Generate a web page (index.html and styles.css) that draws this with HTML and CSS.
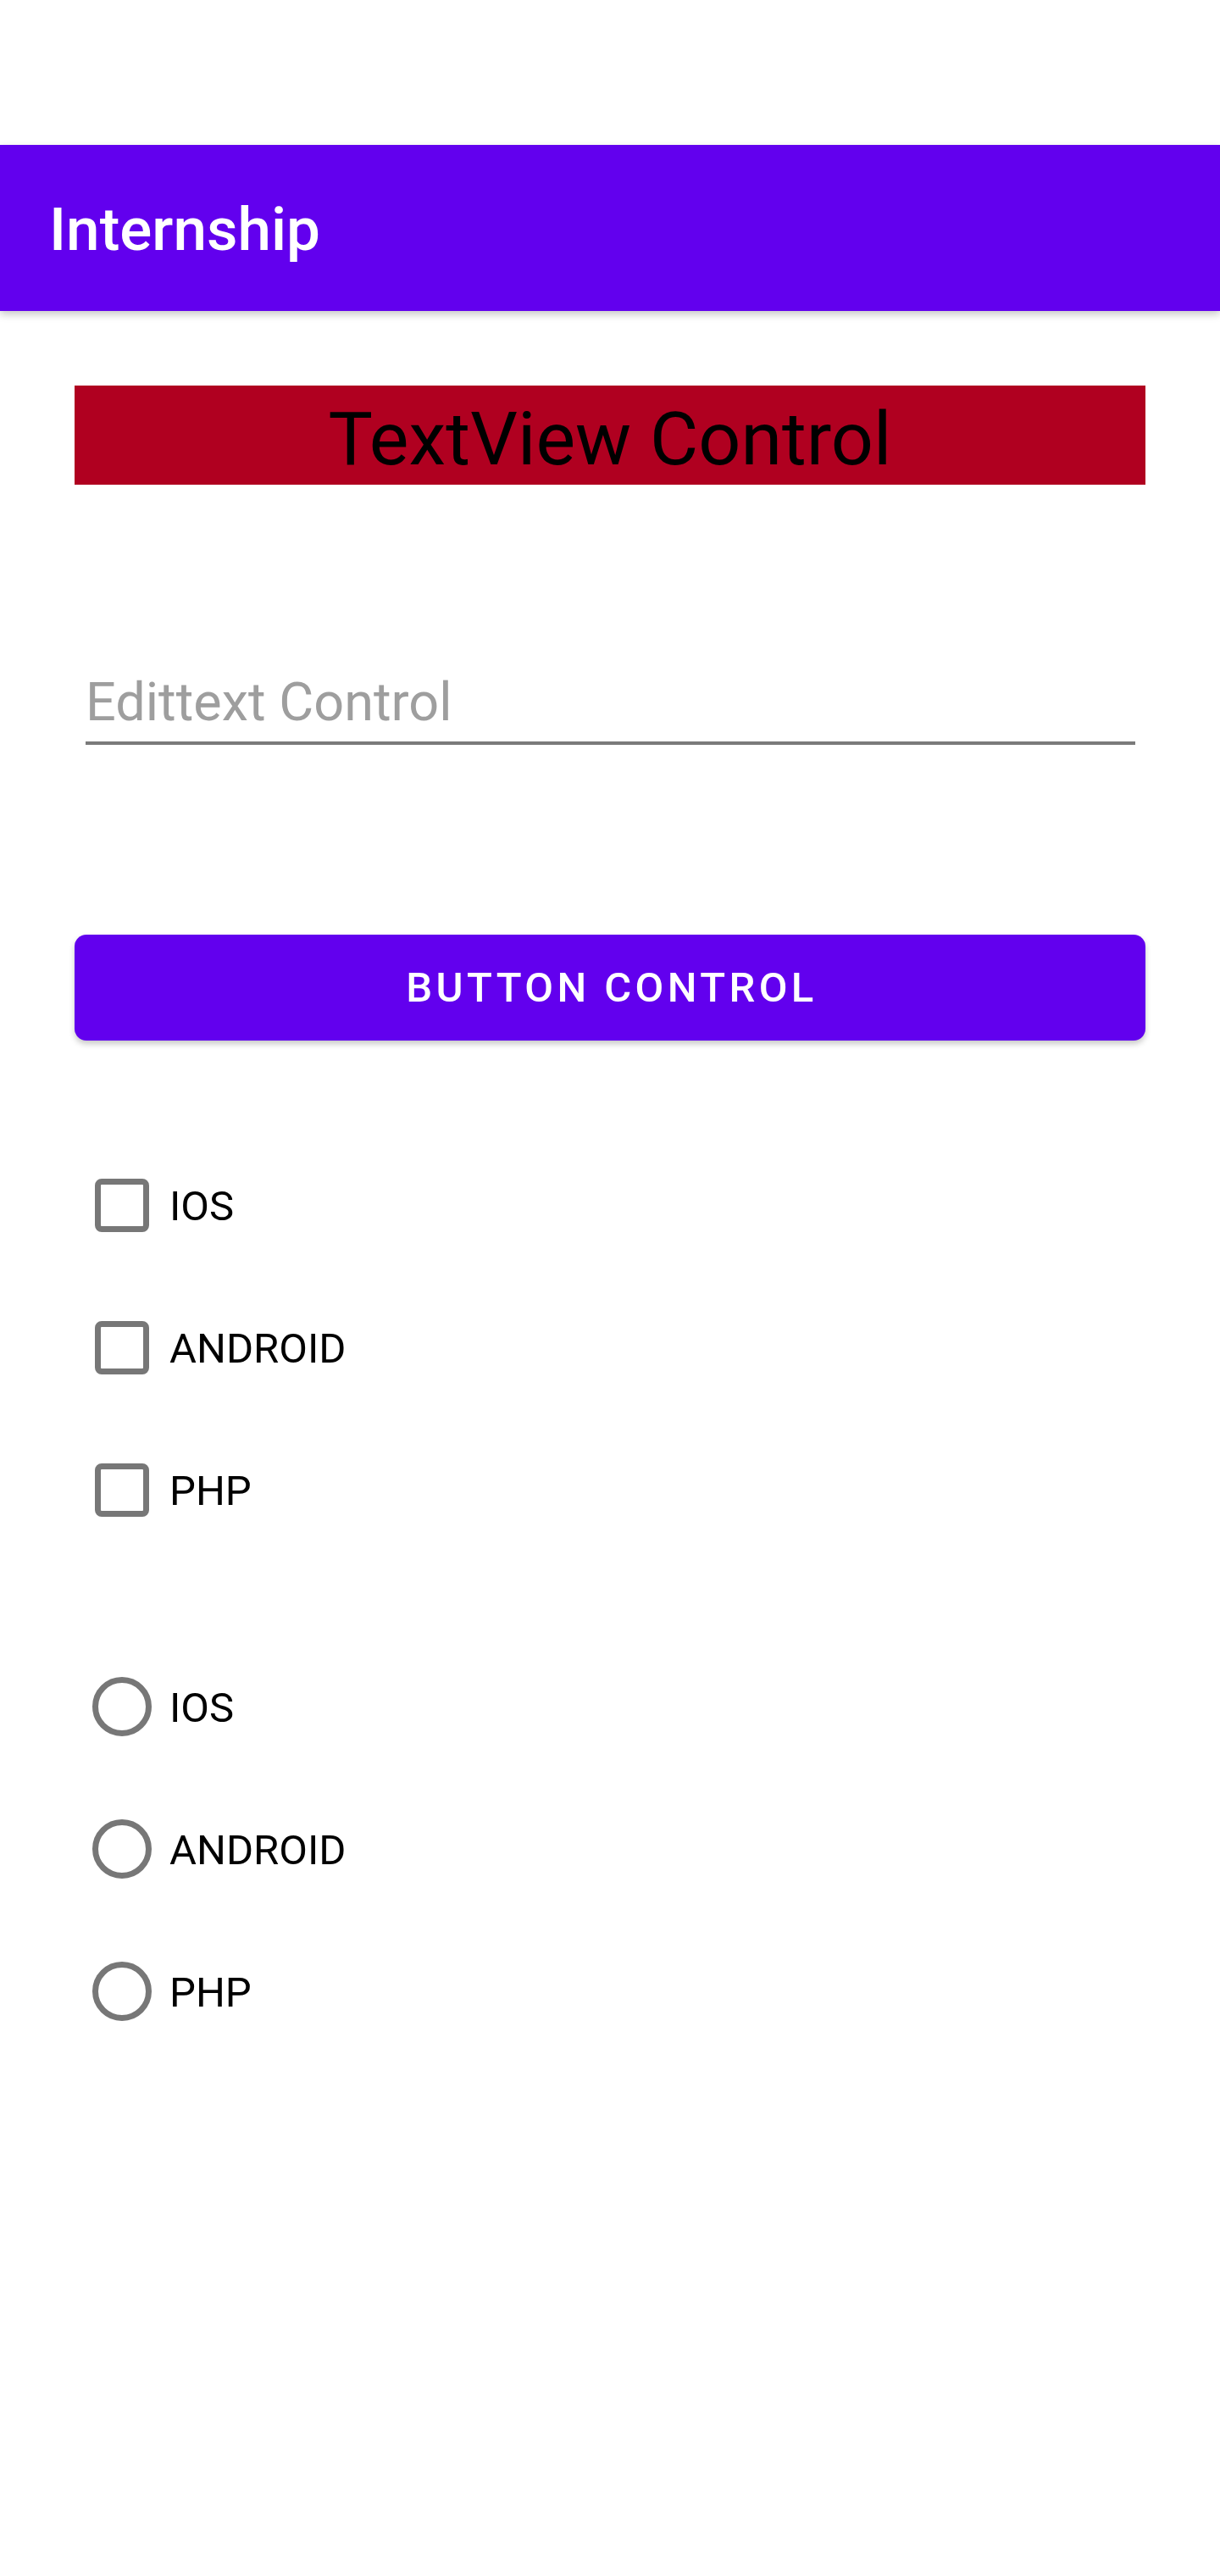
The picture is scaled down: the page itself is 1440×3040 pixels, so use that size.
FILE: index.html
```html
<!DOCTYPE html>
<html lang="en">
<head>
<meta charset="utf-8">
<title>Internship</title>
<link rel="stylesheet" href="styles.css">
</head>
<body>
<div class="status"></div>
<header class="appbar"><span class="title">Internship</span></header>
<main class="content">
  <div class="textview">TextView Control</div>
  <div class="edit">
    <div class="edit-hint">Edittext Control</div>
    <div class="edit-line"></div>
  </div>
  <button class="btn">BUTTON CONTROL</button>
  <div class="group checks">
    <label class="row"><span class="box"></span><span class="label">IOS</span></label>
    <label class="row"><span class="box"></span><span class="label">ANDROID</span></label>
    <label class="row"><span class="box"></span><span class="label">PHP</span></label>
  </div>
  <div class="group radios">
    <label class="row"><span class="circle"></span><span class="label">IOS</span></label>
    <label class="row"><span class="circle"></span><span class="label">ANDROID</span></label>
    <label class="row"><span class="circle"></span><span class="label">PHP</span></label>
  </div>
</main>
</body>
</html>
```
FILE: styles.css
```css
html, body {
  margin: 0;
  padding: 0;
  background: #ffffff;
}
body {
  width: 1440px;
  min-height: 3040px;
  font-family: Roboto, "Noto Sans", "Liberation Sans", sans-serif;
  color: #000;
}
.status {
  height: 171px;
  background: #ffffff;
}
.appbar {
  height: 196px;
  background: #6200ee;
  display: flex;
  align-items: center;
  padding-left: 58px;
  box-shadow: 0 4px 9px rgba(0, 0, 0, 0.22);
  position: relative;
  z-index: 1;
}
.title {
  color: #ffffff;
  font-weight: 500;
  font-size: 71px;
  line-height: 83px;
  padding-top: 2px;
}
.content {
  display: flex;
  flex-direction: column;
  padding: 0 88px;
}
.textview {
  margin-top: 88px;
  height: 117px;
  box-sizing: border-box;
  padding-top: 9px;
  background: #b00020;
  color: #000;
  font-size: 88px;
  line-height: 107px;
  text-align: center;
}
.edit {
  margin-top: 220px;
  display: flex;
  flex-direction: column;
}
.edit-hint {
  padding-left: 13px;
  font-size: 63px;
  line-height: 74px;
  color: #9e9e9e;
}
.edit-line {
  margin: 9px 12px 0 13px;
  height: 4px;
  background: #7a7a7a;
}
.btn {
  margin-top: 224px;
  height: 125px;
  border: none;
  border-radius: 14px;
  background: #6200ee;
  color: #ffffff;
  font-family: Roboto, "Noto Sans", "Liberation Sans", sans-serif;
  font-weight: 500;
  font-size: 49px;
  letter-spacing: 4.4px;
  padding: 0 0 0 4px;
  box-shadow: 0 4px 7px rgba(0, 0, 0, 0.22);
}
.group {
  display: flex;
  flex-direction: column;
}
.checks {
  margin-top: 110px;
}
.radios {
  margin-top: 88px;
}
.row {
  height: 168px;
  display: flex;
  align-items: center;
}
.box {
  width: 64px;
  height: 63px;
  box-sizing: border-box;
  margin-left: 24px;
  border: 7px solid #777777;
  border-radius: 8px;
}
.circle {
  width: 70px;
  height: 70px;
  box-sizing: border-box;
  margin-left: 21px;
  border: 7px solid #777777;
  border-radius: 50%;
}
.label {
  font-size: 49px;
  line-height: 58px;
  padding-top: 3px;
  color: #000;
}
.box + .label {
  margin-left: 24px;
}
.circle + .label {
  margin-left: 21px;
}
```
